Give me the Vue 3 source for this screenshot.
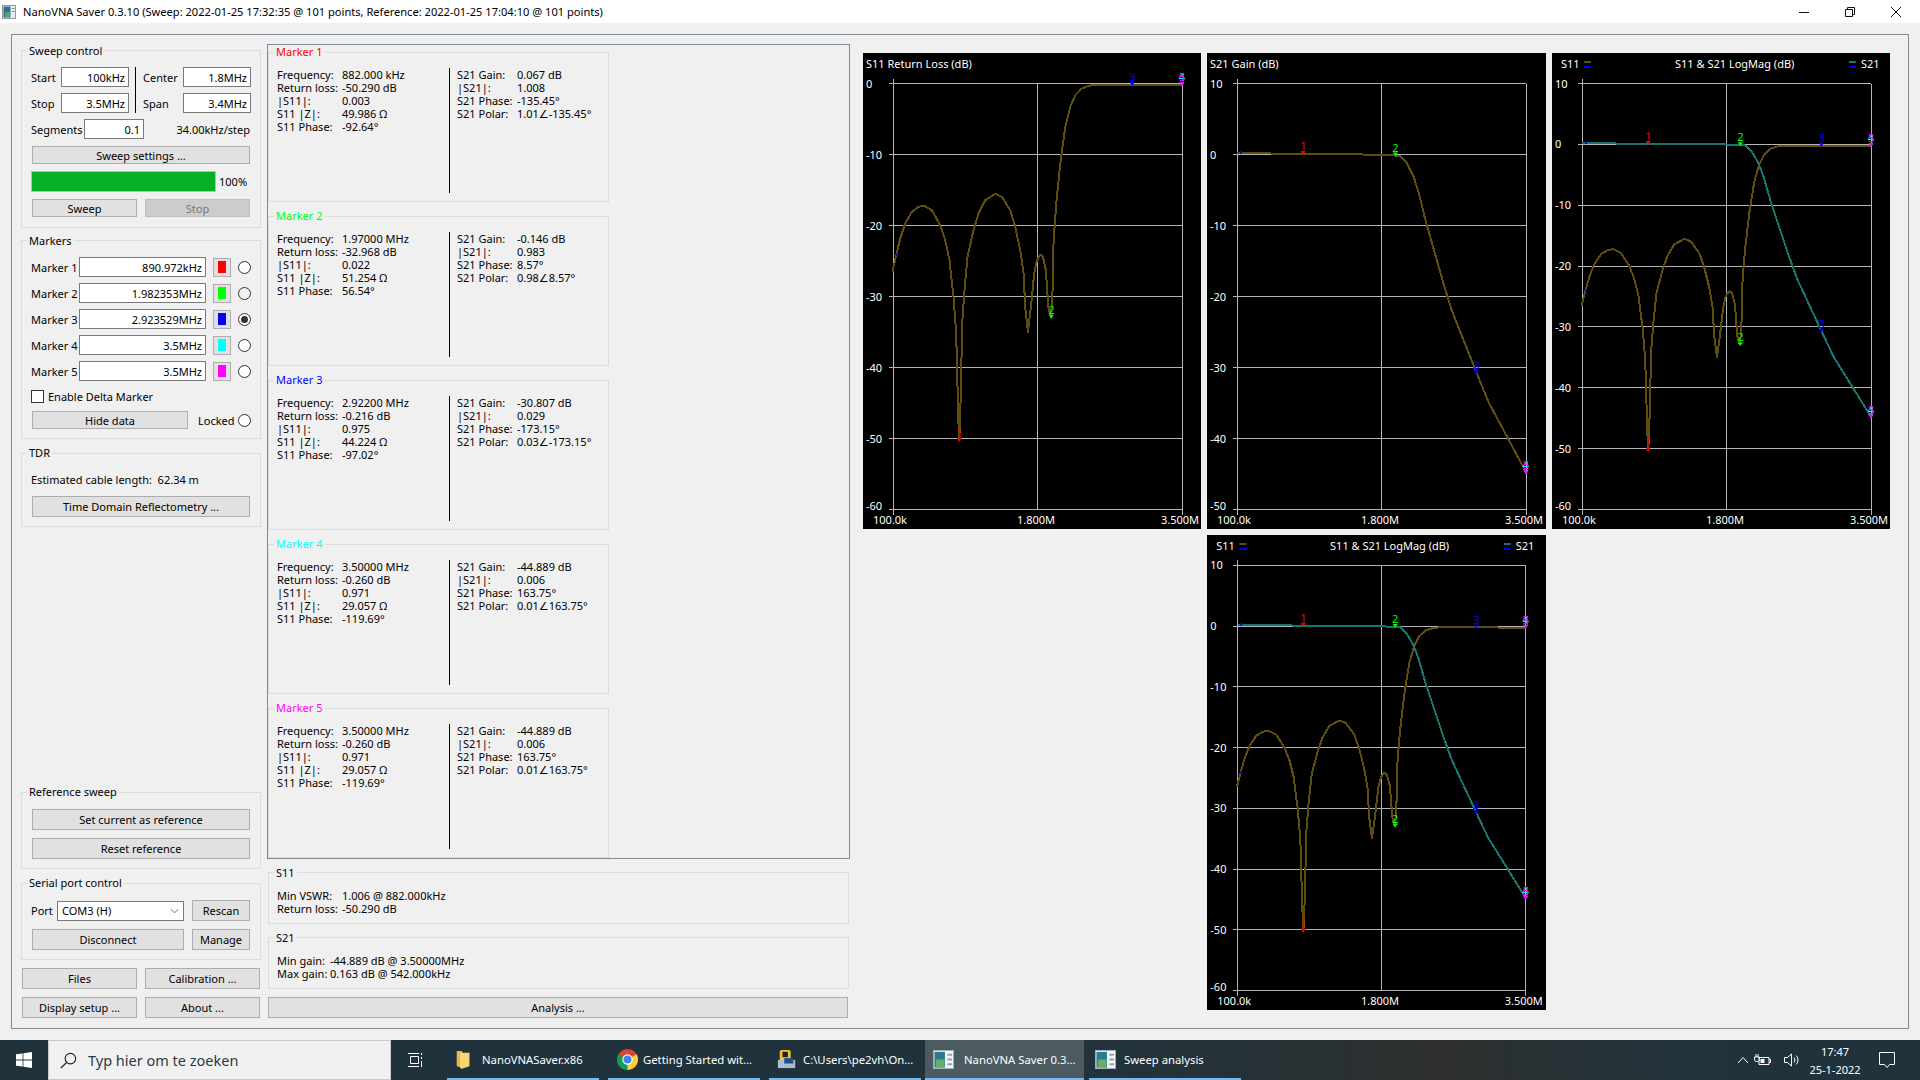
<template>
  <div class="app">
    <header class="titlebar">
      <svg class="app-icon" viewBox="0 0 14 14" width="14" height="14">
        <rect x="0.5" y="0.5" width="13" height="13" fill="#e8edf2" stroke="#8d99a6" />
        <rect x="1.5" y="1.5" width="7" height="11" fill="#2f6f8f" />
        <rect x="3" y="7" width="5" height="5" fill="#58a45c" />
        <rect x="10" y="3" width="2.5" height="1" fill="#7d8894" />
        <rect x="10" y="6" width="2.5" height="1" fill="#7d8894" />
      </svg>
      <span class="title-text">NanoVNA Saver 0.3.10 (Sweep: 2022-01-25 17:32:35 @ 101 points, Reference: 2022-01-25 17:04:10 @ 101 points)</span>
      <div class="win-ctrls">
        <span class="win-btn">
          <svg viewBox="0 0 12 12" width="12" height="12"><path d="M1 6.5h10" stroke="#111" fill="none" /></svg>
        </span>
        <span class="win-btn">
          <svg viewBox="0 0 12 12" width="12" height="12"><path d="M1.5 3.5h7v7h-7zM3.5 3.5v-2h7v7h-2" stroke="#111" fill="none" /></svg>
        </span>
        <span class="win-btn">
          <svg viewBox="0 0 12 12" width="12" height="12"><path d="M1 1l10 10M11 1L1 11" stroke="#111" fill="none" /></svg>
        </span>
      </div>
    </header>

    <main class="frame">
      <div class="col-left">
        <fieldset class="group nudge">
          <legend>Sweep control</legend>
          <div class="group-body">
            <div class="sweep-grid">
              <label>Start</label>
              <input class="field" value="100kHz" readonly />
              <span class="vsep"></span>
              <label>Center</label>
              <input class="field" value="1.8MHz" readonly />
              <label>Stop</label>
              <input class="field" value="3.5MHz" readonly />
              <label>Span</label>
              <input class="field" value="3.4MHz" readonly />
            </div>
            <div class="segments">
              <label>Segments</label>
              <input class="field" value="0.1" readonly />
              <span class="step-size">34.00kHz/step</span>
            </div>
            <button class="btn slim inset">Sweep settings ...</button>
            <div class="progress-row">
              <div class="progress"><div class="progress-fill" :style="{ width: progress + '%' }"></div></div>
              <span>{{ progress }}%</span>
            </div>
            <div class="btn-pair inset">
              <button class="btn slim">Sweep</button>
              <button class="btn slim disabled">Stop</button>
            </div>
          </div>
        </fieldset>

        <fieldset class="group nudge markers-group">
          <legend>Markers</legend>
          <div class="group-body">
            <div v-for="m in markerInputs" :key="m.name" class="marker-row">
              <label>{{ m.name }}</label>
              <input class="field" :value="m.value" readonly />
              <span class="swatch"><i :style="{ background: m.color }"></i></span>
              <span class="radio" :class="{ checked: m.checked, hovered: m.hovered }"></span>
            </div>
            <div class="check-row"><span class="checkbox"></span>Enable Delta Marker</div>
            <div class="hide-row">
              <button class="btn slim">Hide data</button>
              <span class="locked">Locked</span>
              <span class="radio"></span>
            </div>
          </div>
        </fieldset>

        <fieldset class="group tdr-group">
          <legend>TDR</legend>
          <div class="group-body">
            <div class="cable">Estimated cable length:&nbsp; 62.34 m</div>
            <button class="btn inset">Time Domain Reflectometry ...</button>
          </div>
        </fieldset>

        <fieldset class="group ref-group">
          <legend>Reference sweep</legend>
          <div class="group-body stack">
            <button class="btn inset">Set current as reference</button>
            <button class="btn inset">Reset reference</button>
          </div>
        </fieldset>

        <fieldset class="group serial-group">
          <legend>Serial port control</legend>
          <div class="group-body stack">
            <div class="port-row">
              <label>Port</label>
              <div class="combo">
                <span>COM3 (H)</span>
                <svg viewBox="0 0 10 6" width="9" height="6"><path d="M1 1l4 4 4-4" fill="none" stroke="#555" /></svg>
              </div>
              <button class="btn side">Rescan</button>
            </div>
            <div class="conn-row">
              <button class="btn">Disconnect</button>
              <button class="btn side">Manage</button>
            </div>
          </div>
        </fieldset>

        <div class="bottom-btns">
          <button class="btn">Files</button>
          <button class="btn">Calibration ...</button>
          <button class="btn">Display setup ...</button>
          <button class="btn">About ...</button>
        </div>
      </div>

      <div class="col-mid">
        <section class="marker-panel">
          <fieldset v-for="m in markerData" :key="m.name" class="group marker-box">
            <legend :style="{ color: m.color }">{{ m.name }}</legend>
            <div class="marker-body">
              <dl class="readout left">
                <template v-for="r in m.s11" :key="r[0]">
                  <dt>{{ r[0] }}</dt>
                  <dd>{{ r[1] }}</dd>
                </template>
              </dl>
              <span class="marker-sep"></span>
              <dl class="readout right">
                <template v-for="r in m.s21" :key="r[0]">
                  <dt>{{ r[0] }}</dt>
                  <dd>{{ r[1] }}</dd>
                </template>
              </dl>
            </div>
          </fieldset>
        </section>

        <fieldset class="group nudge stat-box">
          <legend>S11</legend>
          <dl class="readout stat">
            <dt>Min VSWR:</dt><dd>1.006 @ 882.000kHz</dd>
            <dt>Return loss:</dt><dd>-50.290 dB</dd>
          </dl>
        </fieldset>
        <fieldset class="group nudge stat-box second">
          <legend>S21</legend>
          <dl class="readout stat narrow">
            <dt>Min gain:</dt><dd>-44.889 dB @ 3.50000MHz</dd>
            <dt>Max gain:</dt><dd>0.163 dB @ 542.000kHz</dd>
          </dl>
        </fieldset>
        <button class="btn analysis">Analysis ...</button>
      </div>

      <div class="charts">
        <svg
          v-for="c in charts"
          :key="c.id"
          class="chart"
          :class="c.cls"
          :viewBox="`0 0 ${c.w} ${c.h}`"
        >
          <g class="grid" shape-rendering="crispEdges">
            <line v-for="t in ticks(c)" :key="t" :x1="P.left - 5" :x2="P.right" :y1="yOf(c, t)" :y2="yOf(c, t)" />
            <line :x1="P.left" :x2="P.left" :y1="P.top - 5" :y2="P.bottom + 5" />
            <line :x1="xOf(0.5)" :x2="xOf(0.5)" :y1="P.top" :y2="P.bottom" />
            <line :x1="P.right" :x2="P.right" :y1="P.top" :y2="P.bottom + 5" />
          </g>

          <text v-for="t in ticks(c)" :key="'l' + t" x="3" :y="labelY(c, t)">{{ t }}</text>
          <text x="10" y="471">100.0k</text>
          <text x="154" y="471">1.800M</text>
          <text x="298" y="471">3.500M</text>

          <template v-if="c.dual">
            <text x="9" y="15">S11</text>
            <rect x="32" y="8" width="7" height="2" :fill="GOLD" />
            <rect x="32" y="13" width="7" height="2" fill="#0000ff" />
            <text x="123" y="15">{{ c.title }}</text>
            <rect x="297" y="8" width="7" height="2" :fill="TEAL" />
            <rect x="297" y="13" width="7" height="2" fill="#0000ff" />
            <text x="309" y="15">S21</text>
          </template>
          <text v-else x="3" y="15">{{ c.title }}</text>

          <polyline
            v-for="s in c.series"
            :key="s.id"
            class="trace"
            shape-rendering="crispEdges"
            :points="tracePoints(c, s.data)"
            :stroke="s.color"
          />

          <g v-for="s in c.series" :key="'m' + s.id">
            <rect :x="xOf(0.012) - 1" :y="yOf(c, s.ref) - 2" width="2" height="3" fill="#0000ff" />
            <g v-for="(m, i) in markerPos" :key="i">
              <path :d="arrow(c, m.f, m[s.key])" :fill="markerData[i].color" />
              <text
                text-anchor="middle"
                :x="xOf(m.f)"
                :y="yOf(c, m[s.key]) - 4"
                :style="{ fill: markerData[i].color }"
              >{{ i + 1 }}</text>
            </g>
          </g>
        </svg>
      </div>
    </main>

    <footer class="taskbar">
      <div class="start">
        <svg viewBox="0 0 16 16" width="16" height="16">
          <path d="M0 2.3l6.6-.9v6.2H0zM7.4 1.3L16 0v7.6H7.4zM0 8.4h6.6v6.2L0 13.7zM7.4 8.4H16V16l-8.6-1.3z" fill="#fff" />
        </svg>
      </div>
      <div class="search">
        <svg viewBox="0 0 18 18" width="17" height="17">
          <circle cx="11" cy="7" r="5.6" fill="none" stroke="#222" stroke-width="1.2" />
          <path d="M7 11l-6 6" stroke="#222" stroke-width="1.4" />
        </svg>
        <span>Typ hier om te zoeken</span>
      </div>
      <div class="task-view">
        <svg viewBox="0 0 16 16" width="16" height="16">
          <path d="M2.5 4.5h8v7h-8zM0 1.5h11M0 14.5h11M13.5 1v2M13.5 5v2M13.5 9v6" fill="none" stroke="#fff" />
        </svg>
      </div>
      <div v-for="t in tasks" :key="t.label" class="task" :class="[t.cls, { active: t.active }]">
        <svg v-if="t.icon === 'folder'" viewBox="0 0 20 24" width="17" height="23">
          <path d="M2 2h6l1 2h0v18l-7-2z" fill="#e6b84a" />
          <path d="M6 4h11v16l-9 3-2-1z" fill="#f6d675" />
        </svg>
        <svg v-else-if="t.icon === 'chrome'" viewBox="0 0 24 24" width="23" height="23">
          <circle cx="12" cy="12" r="11" fill="#db4437" />
          <path d="M12 12L2.5 6.5A11 11 0 0 0 12 23z" fill="#0f9d58" />
          <path d="M12 12v11a11 11 0 0 0 9.5-16.5z" fill="#ffcd40" />
          <circle cx="12" cy="12" r="5.4" fill="#fff" />
          <circle cx="12" cy="12" r="4.2" fill="#4285f4" />
        </svg>
        <svg v-else-if="t.icon === 'console'" viewBox="0 0 22 24" width="20" height="22">
          <rect x="3" y="2" width="12" height="14" rx="2" fill="#f2c230" />
          <rect x="6" y="4" width="6" height="6" fill="#222" />
          <rect x="1" y="13" width="19" height="9" fill="#a9bfd0" />
          <rect x="8" y="11" width="10" height="6" fill="#1d4e8f" />
        </svg>
        <svg v-else viewBox="0 0 22 22" width="21" height="21">
          <rect x="0.5" y="1.5" width="21" height="19" fill="#f2f5f7" stroke="#9fb0bd" />
          <rect x="1.5" y="3" width="11" height="16.5" fill="#2c7a8f" />
          <rect x="3" y="11" width="9" height="8" fill="#64b06a" />
          <rect x="15" y="5" width="5" height="2" fill="#93a1ad" />
          <rect x="15" y="10" width="5" height="2" fill="#93a1ad" />
          <rect x="15" y="15" width="5" height="2" fill="#93a1ad" />
        </svg>
        <span>{{ t.label }}</span>
      </div>
      <div class="tray">
        <svg class="chev" viewBox="0 0 12 8" width="12" height="8"><path d="M1 7l5-5.5L11 7" fill="none" stroke="#fff" /></svg>
        <svg class="plug" viewBox="0 0 18 14" width="18" height="14">
          <path d="M6 4.5h10v7H6zM16 6.5h1.5v3H16M3 1v3M5 1v3M1.5 4h5v2.5a2 2 0 0 1-2 2h-1a2 2 0 0 1-2-2z" fill="none" stroke="#fff" />
          <rect x="7.5" y="6" width="4" height="4" fill="#fff" />
        </svg>
        <svg class="speaker" viewBox="0 0 18 16" width="18" height="16">
          <path d="M1.5 5.5h3l4-3.5v12l-4-3.5h-3zM11 5.5a4 4 0 0 1 0 5M13.3 3.5a7 7 0 0 1 0 9" fill="none" stroke="#fff" />
        </svg>
        <div class="clock"><span>17:47</span><span>25-1-2022</span></div>
        <svg class="notif" viewBox="0 0 18 18" width="18" height="18">
          <path d="M1.5 1.5h15v12h-5l-2.5 3-2.5-3h-5z" fill="none" stroke="#fff" />
        </svg>
      </div>
    </footer>
  </div>
</template>

<script setup>
const GOLD = "#5f4e10";
const TEAL = "#1a746e";
const progress = 100;

// plot area inside each 338 wide chart
const P = { left: 30.5, right: 319, top: 30.5, bottom: 456.5 };

const markerInputs = [
  { name: "Marker 1", value: "890.972kHz", color: "#ff0000" },
  { name: "Marker 2", value: "1.982353MHz", color: "#00ff00", hovered: true },
  { name: "Marker 3", value: "2.923529MHz", color: "#0000ff", checked: true },
  { name: "Marker 4", value: "3.5MHz", color: "#00ffff" },
  { name: "Marker 5", value: "3.5MHz", color: "#ff00ff" },
];

const readout = (name, color, a, b) => ({
  name,
  color,
  s11: [
    ["Frequency:", a[0]],
    ["Return loss:", a[1]],
    ["|S11|:", a[2]],
    ["S11 |Z|:", a[3]],
    ["S11 Phase:", a[4]],
  ],
  s21: [
    ["S21 Gain:", b[0]],
    ["|S21|:", b[1]],
    ["S21 Phase:", b[2]],
    ["S21 Polar:", b[3]],
  ],
});

const markerData = [
  readout("Marker 1", "#ff0000",
    ["882.000 kHz", "-50.290 dB", "0.003", "49.986 Ω", "-92.64°"],
    ["0.067 dB", "1.008", "-135.45°", "1.01∠-135.45°"]),
  readout("Marker 2", "#00ff00",
    ["1.97000 MHz", "-32.968 dB", "0.022", "51.254 Ω", "56.54°"],
    ["-0.146 dB", "0.983", "8.57°", "0.98∠8.57°"]),
  readout("Marker 3", "#0000ff",
    ["2.92200 MHz", "-0.216 dB", "0.975", "44.224 Ω", "-97.02°"],
    ["-30.807 dB", "0.029", "-173.15°", "0.03∠-173.15°"]),
  readout("Marker 4", "#00ffff",
    ["3.50000 MHz", "-0.260 dB", "0.971", "29.057 Ω", "-119.69°"],
    ["-44.889 dB", "0.006", "163.75°", "0.01∠163.75°"]),
  readout("Marker 5", "#ff00ff",
    ["3.50000 MHz", "-0.260 dB", "0.971", "29.057 Ω", "-119.69°"],
    ["-44.889 dB", "0.006", "163.75°", "0.01∠163.75°"]),
];

const markerPos = [
  { f: 0.228, s11: -50.3, s21: 0.07 },
  { f: 0.547, s11: -33, s21: -0.15 },
  { f: 0.828, s11: -0.22, s21: -30.8 },
  { f: 1, s11: -0.26, s21: -44.9 },
  { f: 1, s11: -0.26, s21: -44.9 },
];

// traced off the sweep: [x in px, y in px] of the S11 plot, converted to [f, dB]
const s11 = [
  [97, 695], [108, 645], [120, 595], [135, 550], [155, 515], [175, 500], [192, 497],
  [215, 510], [240, 555], [255, 600], [268, 660], [280, 770], [288, 880], [292, 1040],
  [295, 1150], [297, 1200], [300, 1130], [303, 1000], [306, 850], [313, 750], [322, 650],
  [340, 570], [355, 520], [375, 480], [405, 461], [425, 470], [450, 510], [465, 560],
  [480, 630], [490, 700], [495, 800], [503, 875], [512, 800], [522, 700], [530, 660],
  [540, 644], [548, 650], [557, 690], [564, 800], [571, 830], [576, 780], [580, 600],
  [588, 490], [600, 370], [615, 260], [630, 200], [645, 165], [665, 145], [685, 137],
  [705, 134], [965, 135],
].map(([x, y]) => [(x - 100) / 865, -(y - 130) / 21.3]);

const s21 = [
  [97, 309], [295, 311], [530, 313], [585, 316], [605, 335], [625, 370], [640, 410],
  [660, 480], [680, 540], [700, 600], [720, 660], [740, 715], [770, 780], [812, 870],
  [850, 950], [900, 1030], [962, 1130],
].map(([x, y]) => [(x - 97) / 865, (312.6 - y) / 18.26]);

const traceS11 = { id: "s11", key: "s11", data: s11, color: GOLD, ref: -24.2 };
const traceS21 = { id: "s21", key: "s21", data: s21, color: TEAL, ref: 0.2 };

const charts = [
  { id: 1, w: 338, h: 476, title: "S11 Return Loss (dB)", max: 0, min: -60, series: [traceS11] },
  { id: 2, w: 339, h: 476, title: "S21 Gain (dB)", max: 10, min: -50, series: [{ ...traceS21, color: GOLD }] },
  { id: 3, w: 338, h: 476, title: "S11 & S21 LogMag (dB)", max: 10, min: -60, dual: true, series: [traceS11, traceS21] },
  { id: 4, w: 339, h: 476, cls: "second-row", title: "S11 & S21 LogMag (dB)", max: 10, min: -60, dual: true, series: [traceS11, traceS21] },
];

const ticks = (c) => {
  const out = [];
  for (let t = c.max; t >= c.min; t -= 10) out.push(t);
  return out;
};

const xOf = (f) => P.left + f * (P.right - P.left);
const yOf = (c, db) => P.top + ((c.max - db) / (c.max - c.min)) * (P.bottom - P.top);
const labelY = (c, t) => yOf(c, t) + (t === c.min ? 0 : 4);
const tracePoints = (c, data) =>
  data.map(([f, db]) => `${xOf(f).toFixed(1)},${yOf(c, db).toFixed(1)}`).join(" ");
const arrow = (c, f, db) => {
  const x = xOf(f);
  const y = yOf(c, db);
  return `M${x - 2.5} ${y - 3}h5l-2.5 4z`;
};

const tasks = [
  { label: "NanoVNASaver.x86", icon: "folder", cls: "t1" },
  { label: "Getting Started wit...", icon: "chrome", cls: "t2" },
  { label: "C:\\Users\\pe2vh\\On...", icon: "console", cls: "t3" },
  { label: "NanoVNA Saver 0.3...", icon: "app", cls: "t4", active: true },
  { label: "Sweep analysis", icon: "app", cls: "t5" },
];
</script>

<style>
html,
body {
  margin: 0;
  height: 100%;
  overflow: hidden;
  background: #f0f0f0;
}
</style>

<style scoped>
.app {
  width: 1920px;
  height: 1080px;
  display: flex;
  flex-direction: column;
  font-family: "Noto Sans", "DejaVu Sans", sans-serif;
  font-size: 11px;
  line-height: 13px;
  color: #000;
  background: #f0f0f0;
}

.titlebar {
  height: 23px;
  flex: none;
  background: #fff;
  display: flex;
  align-items: center;
  padding-left: 2px;
}

.app-icon {
  margin-right: 7px;
}

.title-text {
  font-size: 11.1px;
}

.win-ctrls {
  margin-left: auto;
  margin-right: 1px;
  display: flex;
}

.win-btn {
  width: 46px;
  height: 22px;
  display: flex;
  align-items: center;
  justify-content: center;
}

.frame {
  flex: 1;
  min-height: 0;
  margin: 11px;
  border: 1px solid #7f8b96;
  padding: 9px;
  display: flex;
}

/* group boxes */
.group {
  margin: 0;
  padding: 0;
  min-width: 0;
  border: 1px solid #dcdcdc;
}

.group legend {
  margin-left: 5px;
  padding: 0 2px;
  height: 14px;
  line-height: 14px;
}

.group.nudge legend {
  line-height: 16px;
}

.group-body {
  padding: 10px 9px 9px;
  display: flex;
  flex-direction: column;
}

.stack {
  gap: 8px;
}

.col-left {
  width: 240px;
  flex: none;
  margin-top: -1px;
  margin-bottom: 1px;
  display: flex;
  flex-direction: column;
}

.field {
  box-sizing: border-box;
  height: 20px;
  padding: 0 3px;
  border: 1px solid #7a7a7a;
  background: #fff;
  font: inherit;
  text-align: right;
  color: #000;
  outline: none;
  min-width: 0;
}

.btn {
  box-sizing: border-box;
  height: 21px;
  padding: 0;
  border: 1px solid #adadad;
  background: #e1e1e1;
  font: inherit;
  color: #000;
}

.btn.slim {
  height: 18px;
}

.btn.disabled {
  background: #cccccc;
  border-color: #bfbfbf;
  color: #787878;
}

.inset {
  margin-left: 1px;
  margin-right: 1px;
}

.sweep-grid {
  display: grid;
  grid-template-columns: 30px 68px 14px 40px 68px;
  grid-template-rows: 20px 20px;
  row-gap: 6px;
  align-items: center;
}

.sweep-grid .field {
  width: 68px;
}

.sweep-grid label:nth-of-type(3) {
  grid-column: 1;
}

.sweep-grid label:nth-of-type(4) {
  grid-column: 4;
}

.vsep {
  grid-column: 3;
  grid-row: 1 / span 2;
  width: 1px;
  height: 46px;
  background: #000;
  margin-left: 6px;
}

.segments {
  display: flex;
  align-items: center;
  margin-top: 6px;
}

.segments label {
  width: 53px;
}

.segments .field {
  width: 60px;
}

.step-size {
  margin-left: auto;
  margin-right: 1px;
}

.segments + .btn {
  margin-top: 7px;
}

.progress-row {
  display: flex;
  align-items: center;
  gap: 3px;
  margin-top: 7px;
}

.progress {
  width: 185px;
  height: 21px;
  box-sizing: border-box;
  border: 1px solid #bcbcbc;
  background: #e6e6e6;
}

.progress-fill {
  height: 100%;
  background: #06b025;
}

.btn-pair {
  display: grid;
  grid-template-columns: 105px 105px;
  justify-content: space-between;
  margin-top: 7px;
  margin-bottom: 1px;
}

.markers-group {
  margin-top: 5px;
}

.marker-row {
  display: flex;
  align-items: center;
  height: 20px;
  margin-bottom: 6px;
}

.marker-row label {
  width: 48px;
  flex: none;
}

.marker-row .field {
  width: 127px;
  flex: none;
}

.swatch {
  box-sizing: border-box;
  width: 18px;
  height: 19px;
  margin-left: 7px;
  border: 1px solid #adadad;
  background: #e1e1e1;
  display: flex;
  align-items: center;
  justify-content: center;
}

.swatch i {
  width: 8px;
  height: 12px;
}

.radio {
  box-sizing: border-box;
  width: 13px;
  height: 13px;
  margin-left: auto;
  flex: none;
  border: 1px solid #333;
  border-radius: 50%;
  background: #fff;
  position: relative;
}

.radio.hovered {
  background: #f0f0f0;
}

.radio.checked::after {
  content: "";
  position: absolute;
  inset: 2px;
  border-radius: 50%;
  background: #333;
}

.check-row {
  display: flex;
  align-items: center;
  margin-top: 3px;
}

.checkbox {
  box-sizing: border-box;
  width: 13px;
  height: 13px;
  margin-right: 4px;
  border: 1px solid #333;
  background: #fff;
}

.hide-row {
  display: flex;
  align-items: center;
  margin-top: 8px;
  padding-left: 1px;
}

.hide-row .btn {
  width: 156px;
}

.locked {
  margin-left: 10px;
}

.tdr-group {
  margin-top: 7px;
}

.tdr-group .group-body {
  padding-top: 13px;
}

.cable {
  height: 14px;
  line-height: 14px;
  margin-bottom: 9px;
}

.ref-group {
  margin-top: auto;
}

.serial-group {
  margin-top: 7px;
}

.port-row,
.conn-row {
  display: flex;
  align-items: center;
}

.port-row label {
  width: 26px;
}

.combo {
  box-sizing: border-box;
  width: 127px;
  height: 20px;
  border: 1px solid #7a7a7a;
  background: #fff;
  display: flex;
  align-items: center;
  justify-content: space-between;
  padding: 0 4px;
}

.btn.side {
  width: 58px;
  margin-left: 8px;
}

.conn-row {
  padding-left: 1px;
}

.conn-row .btn:first-child {
  width: 152px;
}

.bottom-btns {
  display: grid;
  grid-template-columns: 115px 115px;
  column-gap: 8px;
  row-gap: 8px;
  margin-top: 8px;
  padding-left: 1px;
}

.col-mid {
  width: 583px;
  flex: none;
  margin-left: 6px;
  display: flex;
  flex-direction: column;
}

.marker-panel {
  box-sizing: border-box;
  height: 815px;
  border: 1px solid #7f8b96;
  display: flex;
  flex-direction: column;
  gap: 7px;
  align-items: flex-start;
}

.marker-box {
  width: 341px;
  box-sizing: border-box;
}

.marker-body {
  display: flex;
  height: 125px;
  margin: 9px 0 8px;
  padding-left: 8px;
}

.readout {
  margin: 0;
  display: grid;
  align-content: start;
  grid-auto-rows: 13px;
  white-space: nowrap;
}

.readout dd {
  margin: 0;
}

.readout.left {
  width: 172px;
  grid-template-columns: 65px 1fr;
}

.readout.right {
  margin-left: 7px;
  grid-template-columns: 60px 1fr;
}

.marker-sep {
  width: 1px;
  background: #000;
}

.stat-box {
  margin: 6px 1px 0;
}

.stat-box.second {
  margin-top: 6px;
}

.readout.stat {
  padding: 10px 8px 8px;
  grid-template-columns: 65px 1fr;
}

.readout.stat.narrow {
  grid-template-columns: 53px 1fr;
}

.analysis {
  margin: 8px 2px 0 1px;
}

.charts {
  margin-left: 13px;
  padding-top: 9px;
  display: grid;
  grid-template-columns: 338px 339px 338px;
  grid-template-rows: 476px 476px;
  column-gap: 6px;
  row-gap: 6px;
}

.chart {
  width: 100%;
  height: 476px;
  background: #000;
  display: block;
  font-size: 11px;
}

.chart text {
  fill: #fff;
}

.second-row {
  grid-column: 2;
  grid-row: 2;
  height: 475px;
}

.grid line {
  stroke: #b4b4b4;
  stroke-width: 1;
}

.trace {
  fill: none;
  stroke-width: 2;
  stroke-linejoin: round;
}

/* taskbar */
.taskbar {
  height: 40px;
  flex: none;
  display: flex;
  color: #fff;
  font-size: 11.3px;
  background: linear-gradient(90deg, #20333d 0%, #20333d 55%, #2d2f2e 75%, #20333d 90%, #20333d 100%);
}

.start {
  width: 48px;
  display: flex;
  align-items: center;
  justify-content: center;
}

.search {
  box-sizing: border-box;
  width: 343px;
  border: 1px solid #c9c9c9;
  background: #f1f1f1;
  color: #2b3a44;
  display: flex;
  align-items: center;
  font-size: 14.5px;
  padding-left: 11px;
  gap: 11px;
}

.task-view {
  width: 50px;
  margin-right: 6px;
  display: flex;
  align-items: center;
  justify-content: center;
}

.task {
  box-sizing: border-box;
  height: 40px;
  width: 152px;
  border-bottom: 2px solid #76b9ed;
  display: flex;
  align-items: center;
  gap: 10px;
  white-space: nowrap;
  padding-left: 8px;
}

.t2 {
  gap: 4px;
}

.t3 {
  gap: 6px;
}

.t2,
.t3 {
  margin-left: 9px;
}

.t4 {
  margin-left: 4px;
  width: 159px;
}

.t5 {
  margin-left: 5px;
  padding-left: 6px;
  gap: 8px;
}

.active {
  background: #4c5b60;
}

.tray {
  margin-left: auto;
  display: flex;
  align-items: center;
  padding-right: 24px;
}

.chev {
  margin-right: 4px;
}

.plug {
  margin-right: 12px;
}

.speaker {
  margin-right: 2px;
}

.clock {
  width: 64px;
  display: flex;
  flex-direction: column;
  align-items: center;
  gap: 5px;
  font-size: 11px;
}

.notif {
  margin-left: 11px;
}
</style>
